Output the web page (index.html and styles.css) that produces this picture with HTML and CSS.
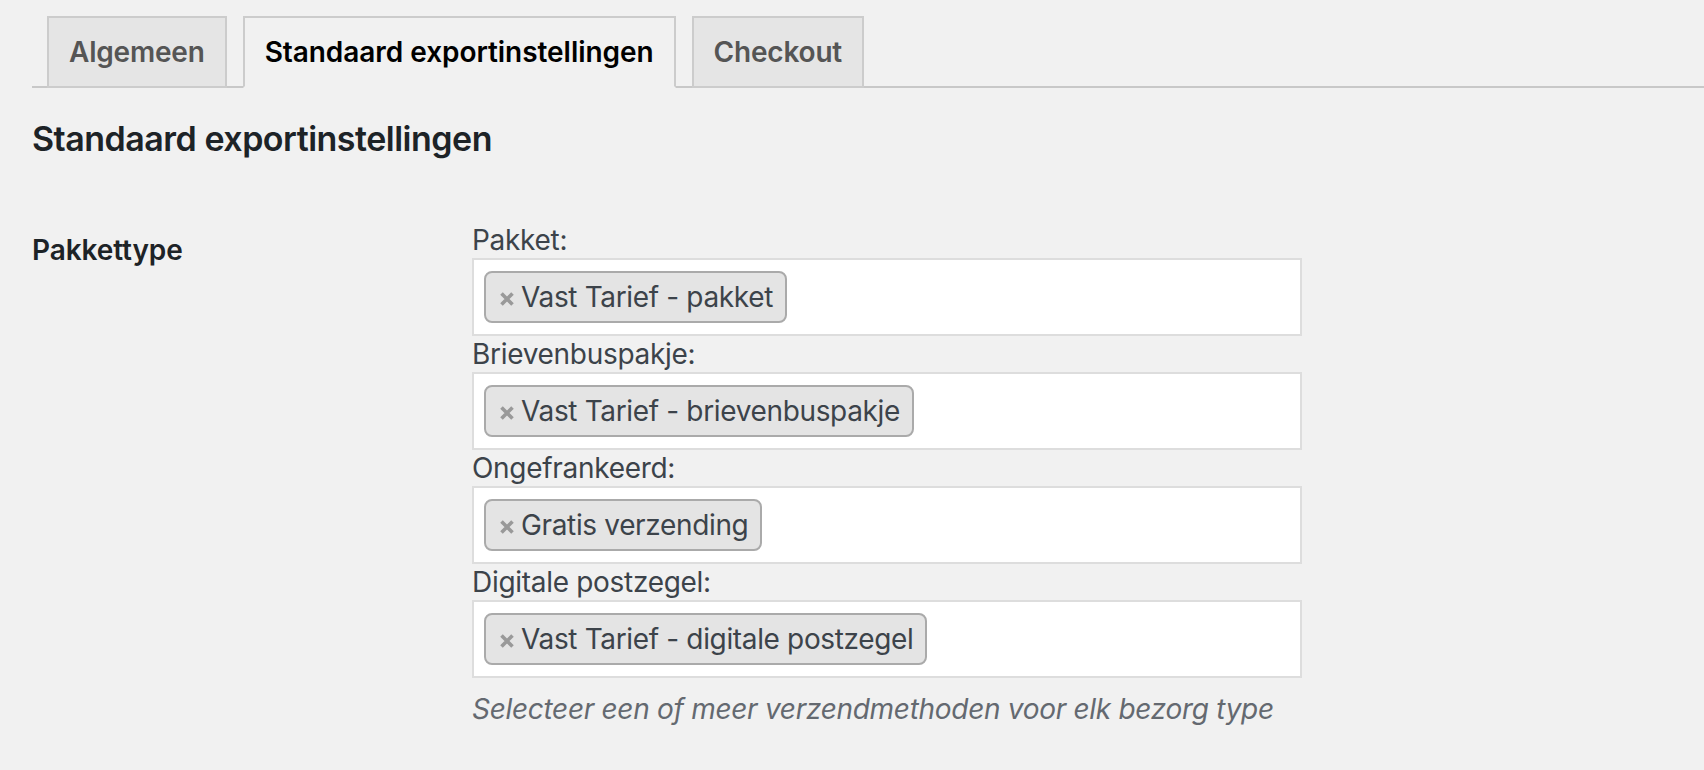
FILE: index.html
```html
<!DOCTYPE html>
<html lang="nl">
<head>
<meta charset="utf-8">
<title>Standaard exportinstellingen</title>
<link rel="stylesheet" href="styles.css">
</head>
<body>
<div class="wrap">
  <nav class="tabs">
    <a class="tab">Algemeen</a>
    <a class="tab active">Standaard exportinstellingen</a>
    <a class="tab">Checkout</a>
  </nav>
  <h2 class="title">Standaard exportinstellingen</h2>
  <div class="row">
    <div class="row-label">Pakkettype</div>
    <div class="row-field">
      <div class="field-label">Pakket:</div>
      <div class="select"><span class="chip"><svg class="chip-x" viewBox="0 0 14 14" aria-hidden="true"><path d="M1.5 1.5L12.5 12.5M12.5 1.5L1.5 12.5"/></svg>Vast Tarief - pakket</span></div>
      <div class="field-label">Brievenbuspakje:</div>
      <div class="select"><span class="chip"><svg class="chip-x" viewBox="0 0 14 14" aria-hidden="true"><path d="M1.5 1.5L12.5 12.5M12.5 1.5L1.5 12.5"/></svg>Vast Tarief - brievenbuspakje</span></div>
      <div class="field-label">Ongefrankeerd:</div>
      <div class="select"><span class="chip"><svg class="chip-x" viewBox="0 0 14 14" aria-hidden="true"><path d="M1.5 1.5L12.5 12.5M12.5 1.5L1.5 12.5"/></svg>Gratis verzending</span></div>
      <div class="field-label">Digitale postzegel:</div>
      <div class="select"><span class="chip"><svg class="chip-x" viewBox="0 0 14 14" aria-hidden="true"><path d="M1.5 1.5L12.5 12.5M12.5 1.5L1.5 12.5"/></svg>Vast Tarief - digitale postzegel</span></div>
      <p class="description">Selecteer een of meer verzendmethoden voor elk bezorg type</p>
    </div>
  </div>
</div>
</body>
</html>
```
FILE: styles.css
```css
* { box-sizing: border-box; }
html, body { margin: 0; padding: 0; }
body {
  background: #f1f1f1;
  font-family: Inter, "Liberation Sans", sans-serif;
  color: #3c434a;
  width: 1704px;
  height: 770px;
  overflow: hidden;
}
.wrap { padding-left: 32px; }
.tabs {
  display: flex;
  gap: 16px;
  padding: 16px 0 0 15px;
  border-bottom: 2px solid #c8c8c8;
}
.tab {
  display: block;
  margin-bottom: -2px;
  padding: 10px 20px;
  border: 2px solid #cccccc;
  background: #e5e5e5;
  color: #555555;
  font-size: 28px;
  font-weight: 600;
  line-height: 48px;
  letter-spacing: -0.2px;
  white-space: nowrap;
}
.tab.active {
  background: #f1f1f1;
  border-bottom-color: #f1f1f1;
  color: #000000;
  letter-spacing: -0.05px;
}
.title {
  margin: 29px 0 31px;
  font-size: 34px;
  line-height: 44px;
  font-weight: 600;
  color: #1d2327;
  letter-spacing: -0.5px;
}
.row {
  display: grid;
  grid-template-columns: 440px 830px;
}
.row-label {
  padding-top: 40px;
  font-size: 28px;
  line-height: 36px;
  font-weight: 600;
  color: #1d2327;
  letter-spacing: -0.1px;
}
.row-field { padding-top: 30px; }
.field-label {
  font-size: 28px;
  line-height: 36px;
  color: #3c434a;
  letter-spacing: -0.3px;
}
.select {
  display: flex;
  height: 78px;
  padding: 11px 10px;
  background: #ffffff;
  border: 2px solid #dddddd;
}
.chip {
  display: inline-flex;
  align-items: center;
  height: 52px;
  padding: 0 12px 0 14px;
  border: 2px solid #aaaaaa;
  border-radius: 8px;
  background: #e4e4e4;
  font-size: 28px;
  line-height: 48px;
  color: #3c434a;
  letter-spacing: -0.35px;
}
.chip-x {
  width: 14px;
  height: 14px;
  margin: 3px 7px 0 0;
  flex: none;
  fill: none;
  stroke: #999999;
  stroke-width: 3.6;
}
.description {
  margin: 13px 0 0;
  font-size: 28px;
  line-height: 36px;
  font-style: italic;
  color: #646970;
  letter-spacing: -0.3px;
}
```
